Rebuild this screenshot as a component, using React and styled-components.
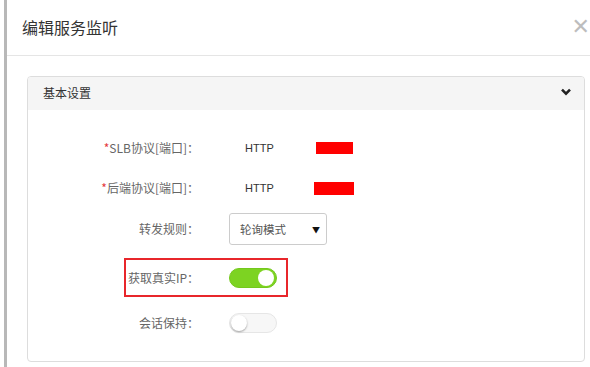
import React from "react";
import styled, { createGlobalStyle } from "styled-components";

const Global = createGlobalStyle`
  html, body { margin: 0; padding: 0; background: #fff; }
  body {
    font-family: "Noto Sans CJK SC", sans-serif;
    overflow: hidden;
  }
  * { box-sizing: border-box; }
`;

const Page = styled.div`
  width: 590px;
  height: 367px;
  padding-left: 4px;
  background: #fff;
`;

const Modal = styled.div`
  height: 100%;
  border-left: 3px solid #b8b8b8;
  background: #fff;
  display: flex;
  flex-direction: column;
`;

const Header = styled.div`
  height: 56px;
  display: flex;
  align-items: center;
  justify-content: space-between;
  padding: 0 0 2px 15px;
  border-bottom: 1px solid #e5e5e5;
`;

const Title = styled.h4`
  margin: 0;
  font-family: "Noto Sans CJK SC", sans-serif;
  font-size: 16px;
  font-weight: 400;
  color: #333;
`;

const Close = styled.span`
  font-family: "DejaVu Sans", sans-serif;
  font-size: 22px;
  font-weight: 400;
  line-height: 1;
  color: #bdbdbd;
  margin-top: 1px;
`;

const Body = styled.div`
  padding: 20px 5px 0 20px;
`;

const Panel = styled.div`
  border: 1px solid #ddd;
  border-radius: 4px;
  height: 286px;
  overflow: hidden;
`;

const PanelHeading = styled.div`
  height: 33px;
  background: #f5f5f5;
  display: flex;
  align-items: center;
  justify-content: space-between;
  padding: 0 13px 3px 15px;
  font-family: "Noto Sans CJK SC", sans-serif;
  font-size: 12px;
  color: #333;
`;

const PanelBody = styled.div`
  display: flex;
  flex-direction: column;
  padding-top: 20px;
`;

const Row = styled.div`
  display: flex;
  align-items: center;
  height: ${(p) => p.$h}px;
  margin-top: ${(p) => p.$mt || 0}px;
`;

const Highlight = styled.div`
  display: flex;
  align-items: center;
  height: 100%;
  margin-left: 96px;
  width: 164px;
  border: 2px solid #e8262b;
  padding-left: 2px;
`;

const Label = styled.label`
  flex: none;
  width: ${(p) => p.$w}px;
  text-align: right;
  font-family: "Noto Sans CJK SC", sans-serif;
  font-size: 12px;
  color: #666;
  margin-right: ${(p) => p.$gap}px;
  white-space: nowrap;
  line-height: 1;
`;

const Star = styled.span`
  color: #e4393c;
`;

const Static = styled.span`
  padding-left: 16px;
  font-family: "Liberation Sans", sans-serif;
  font-size: 11px;
  color: #333;
`;

const Redact = styled.span`
  display: inline-block;
  width: ${(p) => p.$w}px;
  height: ${(p) => p.$hh}px;
  background: #ff0000;
  margin-left: ${(p) => p.$ml}px;
`;

const Select = styled.div`
  width: 98px;
  height: 32px;
  border: 1px solid #ccc;
  border-radius: 3px;
  display: flex;
  align-items: center;
  justify-content: space-between;
  padding: 0 6px 0 10px;
  font-family: "Noto Sans CJK SC", sans-serif;
  font-size: 11.5px;
  color: #555;
`;

const Caret = styled.span`
  font-size: 8px;
  color: #111;
`;

const Toggle = styled.span`
  position: relative;
  display: inline-block;
  width: 48px;
  height: 20px;
  border-radius: 10px;
  background: ${(p) => (p.$on ? "#7dd322" : "#f7f7f7")};
  border: 1px solid ${(p) => (p.$on ? "#74c81d" : "#e6e6e6")};
  &::after {
    content: "";
    position: absolute;
    top: 1px;
    ${(p) => (p.$on ? "right: 2px;" : "left: 1px;")}
    width: 16px;
    height: 16px;
    border-radius: 50%;
    background: #fff;
    box-shadow: ${(p) =>
      p.$on ? "none" : "0 1px 2px rgba(0,0,0,0.35)"};
  }
`;

const Chevron = () => (
  <svg width="10" height="8" viewBox="0 0 10 8">
    <path d="M1 1.6 L5 5.6 L9 1.6" fill="none" stroke="#222" strokeWidth="2.6" strokeLinecap="butt" />
  </svg>
);

export default function App() {
  return (
    <>
      <Global />
      <Page>
        <Modal>
          <Header>
            <Title>编辑服务监听</Title>
            <Close>✕</Close>
          </Header>
          <Body>
            <Panel>
              <PanelHeading>
                <span>基本设置</span>
                <Chevron />
              </PanelHeading>
              <PanelBody>
                <Row $h={36}>
                  <Label $w={171} $gap={30}>
                    <Star>*</Star>SLB协议[端口]：
                  </Label>
                  <Static>HTTP</Static>
                  <Redact $w={37} $hh={12} $ml={42} />
                </Row>
                <Row $h={36} $mt={4}>
                  <Label $w={171} $gap={30}>
                    <Star>*</Star>后端协议[端口]：
                  </Label>
                  <Static>HTTP</Static>
                  <Redact $w={40} $hh={13} $ml={40} />
                </Row>
                <Row $h={32} $mt={7}>
                  <Label $w={171} $gap={30}>转发规则：</Label>
                  <Select>
                    <span>轮询模式</span>
                    <Caret>▼</Caret>
                  </Select>
                </Row>
                <Row $h={39} $mt={13}>
                  <Highlight>
                    <Label $w={71} $gap={30}>获取真实IP：</Label>
                    <Toggle $on />
                  </Highlight>
                </Row>
                <Row $h={36} $mt={8}>
                  <Label $w={171} $gap={30}>会话保持：</Label>
                  <Toggle />
                </Row>
              </PanelBody>
            </Panel>
          </Body>
        </Modal>
      </Page>
    </>
  );
}
